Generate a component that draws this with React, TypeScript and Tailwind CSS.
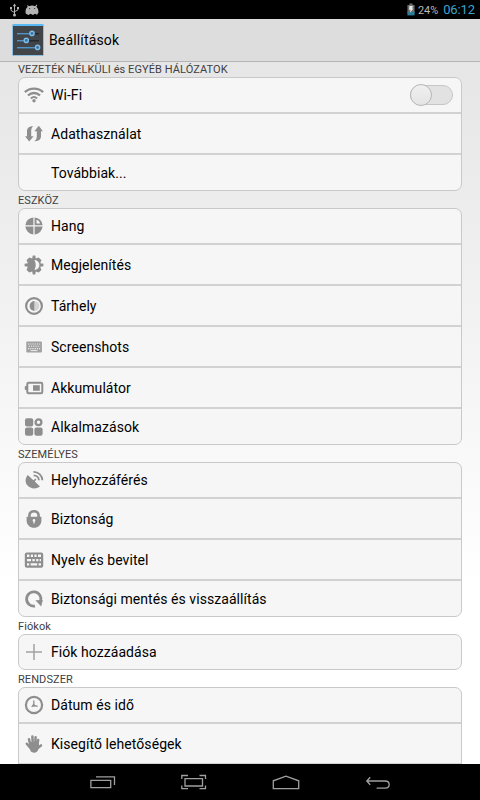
import { ReactNode } from "react";

const icons: Record<string, ReactNode> = {
  wifi: (
    <g fill="none" stroke="#8e8e8e" strokeWidth="2.4">
      <path d="M.9 7.2C5.8 2.4 14.2 2.4 19.1 7.2" />
      <path d="M4 10.5C7.4 7.2 12.6 7.2 16 10.5" />
      <path strokeWidth="2" d="M6.9 13.4C8.7 11.7 11.3 11.7 13.1 13.4" />
      <circle cx="10" cy="15.8" r="1.7" fill="#8e8e8e" stroke="none" />
    </g>
  ),
  data: (
    <g fill="#8e8e8e">
      <path d="M9.4 2.2C4.8 2 3 4.2 3 7.4V12.2H1.1L5.2 17.6L9.6 12.2H7.2V7.2C7.2 4.8 7.8 3.2 9.4 2.2Z" />
      <path d="M10.4 17.2C15 17.4 17 15.2 17 12V7.2H18.9L14.8 1.8L10.4 7.2H12.8V12C12.8 14.6 12 16.2 10.4 17.2Z" />
    </g>
  ),
  sound: (
    <g fill="#8e8e8e">
      <path d="M9.4 1.4V9.3H1.4A8.4 8.4 0 0 1 9.4 1.4Z" />
      <path d="M9.4 10.6V18.4A8.4 8.4 0 0 1 1.4 10.6Z" />
      <path d="M10.6 10.6H18.6A8.4 8.4 0 0 1 10.6 18.4Z" />
      <path
        fillRule="evenodd"
        d="M10.6 1.4A8.4 8.4 0 0 1 18.6 9.3H10.6ZM12.5 3.8V7.5H16.2C15.5 5.6 14.4 4.4 12.5 3.8Z"
      />
    </g>
  ),
  display: (
    <g>
      <path
        fill="#8e8e8e"
        d="M8.2 3.6L8.8 .6H11.2L11.8 3.6L14.6 2.4L17.4 5L16.2 8.2L19.4 8.8V11.2L16.2 11.8L17.4 15L14.8 17.6L11.8 16.4L11.2 19.4H8.8L8.2 16.4L5.2 17.6L2.6 15L3.8 11.8L.6 11.2V8.8L3.8 8.2L2.6 5L5.4 2.4Z"
      />
      <path fill="#f6f6f6" d="M10.4 5A5 5 0 0 1 10.4 15C12.2 12 12.2 8 10.4 5Z" />
    </g>
  ),
  storage: (
    <g>
      <circle cx="10" cy="10" r="7.9" fill="none" stroke="#8e8e8e" strokeWidth="2.2" />
      <path fill="#8e8e8e" d="M10.6 5V15A5 5 0 0 1 10.6 5Z" />
      <path fill="#d4d4d4" d="M10.6 5.2A4.8 4.8 0 0 1 10.6 14.8Z" />
    </g>
  ),
  screenshots: (
    <g>
      <rect x="2.3" y="4.6" width="15.6" height="10.8" rx="1" fill="#a0a0a0" />
      <path
        stroke="#ededed"
        strokeWidth="1.1"
        strokeDasharray="1.2 1"
        d="M4 7H16.6M4.8 9.3H16.2M4 11.6H16.6"
      />
      <path stroke="#ededed" strokeWidth="1" d="M6.6 13.6H13.4" />
    </g>
  ),
  battery: (
    <g>
      <rect x="3.3" y="4.7" width="15" height="10.6" rx="1.3" fill="none" stroke="#8e8e8e" strokeWidth="2" />
      <rect x=".8" y="8" width="2.6" height="4" rx=".8" fill="#8e8e8e" />
      <rect x="9" y="7.2" width="6.8" height="5.6" fill="#8e8e8e" />
    </g>
  ),
  apps: (
    <g fill="#8e8e8e">
      <rect x="1" y="1.2" width="8.2" height="8.2" rx="2" />
      <rect x="1" y="10.6" width="8.2" height="8.2" rx="2" />
      <rect x="10.4" y="10.6" width="8.2" height="8.2" rx="2" />
      <circle cx="14.5" cy="5.3" r="2.9" fill="none" stroke="#8e8e8e" strokeWidth="2.3" />
    </g>
  ),
  location: (
    <g>
      <path fill="#8e8e8e" d="M3.8 5L9.4 10.2L11.4 8.6L12.4 9.6L10.8 11.6L16 16.6C11.6 19.6 6.4 18.8 3.6 15.6C.9 12.6.9 8.4 3.8 5Z" />
      <path
        fill="none"
        stroke="#8e8e8e"
        strokeWidth="1.8"
        d="M9.4 1.8C14.2 1.6 18.2 5.4 18.4 10.2M9.6 5.3C12.6 5.3 14.8 7.4 14.9 10.2"
      />
    </g>
  ),
  lock: (
    <g>
      <path fill="none" stroke="#8e8e8e" strokeWidth="2.6" d="M5.4 9V6.4C5.4.8 14.6.8 14.6 6.4V9" />
      <path fill="#8e8e8e" d="M2.6 7.8H17.4V11.4C17.4 15.8 14 18.8 10 18.8S2.6 15.8 2.6 11.4Z" />
      <circle cx="10" cy="11.4" r="1.3" fill="#f6f6f6" />
      <path stroke="#f6f6f6" strokeWidth="1.2" d="M10 12V14.6" />
    </g>
  ),
  keyboard: (
    <g>
      <rect x=".8" y="2.4" width="18.4" height="15.4" rx="2" fill="#8e8e8e" />
      <path
        stroke="#f6f6f6"
        strokeWidth="2.4"
        d="M3 5.8H5.4M6.8 5.8H9M10.4 5.8H12.6M14 5.8H17M3 10.1H7M8.4 10.1H10.8M12.2 10.1H14.4M15.6 10.1H17M3 14.4H5.2M6.6 14.4H13.2M14.6 14.4H17"
      />
    </g>
  ),
  backup: (
    <g>
      <path fill="none" stroke="#8e8e8e" strokeWidth="2.8" d="M11 17.1A7.2 7.2 0 1 1 16.6 12.4" />
      <path fill="#8e8e8e" d="M11.4 11.2L18.8 11L17.2 17.6Z" />
    </g>
  ),
  add: <path stroke="#a2a2a2" strokeWidth="1.5" d="M10 2V18M2 10H18" />,
  clock: (
    <g fill="none" stroke="#8e8e8e">
      <circle cx="10" cy="10" r="8.1" strokeWidth="2.2" />
      <path strokeWidth="1.3" d="M9.8 5.6V10.4L13.6 11.4M9.8 9L7.8 12" />
      <circle cx="10" cy="10.6" r="1.2" fill="#8e8e8e" stroke="none" />
    </g>
  ),
  hand: (
    <g fill="none" stroke="#8e8e8e" strokeLinecap="round" strokeWidth="2.5">
      <path d="M5 5.2L6.6 12M8.4 2.6L8.8 11M11.6 3.2L11.2 11M14.2 6L13 12M2.8 9.8L6.4 14M17 11.4L12.6 14.8" />
      <path fill="#8e8e8e" stroke="none" d="M4.4 11L6 8H14.4L15.4 13.4L13 17.8C11 19 8.4 18.9 6.8 17.6Z" />
    </g>
  ),
};

const sections = [
  {
    title: "VEZETÉK NÉLKÜLI és EGYÉB HÁLÓZATOK",
    items: [
      { icon: "wifi", label: "Wi-Fi", toggle: true },
      { icon: "data", label: "Adathasználat" },
      { icon: "", label: "Továbbiak..." },
    ],
  },
  {
    title: "ESZKÖZ",
    items: [
      { icon: "sound", label: "Hang" },
      { icon: "display", label: "Megjelenítés" },
      { icon: "storage", label: "Tárhely" },
      { icon: "screenshots", label: "Screenshots" },
      { icon: "battery", label: "Akkumulátor" },
      { icon: "apps", label: "Alkalmazások" },
    ],
  },
  {
    title: "SZEMÉLYES",
    items: [
      { icon: "location", label: "Helyhozzáférés" },
      { icon: "lock", label: "Biztonság" },
      { icon: "keyboard", label: "Nyelv és bevitel" },
      { icon: "backup", label: "Biztonsági mentés és visszaállítás" },
    ],
  },
  {
    title: "Fiókok",
    items: [{ icon: "add", label: "Fiók hozzáadása" }],
  },
  {
    title: "RENDSZER",
    items: [
      { icon: "clock", label: "Dátum és idő" },
      { icon: "hand", label: "Kisegítő lehetőségek" },
      { icon: "", label: "" },
    ],
  },
];

const StatusBar = () => (
  <div className="flex h-[19px] shrink-0 items-center justify-between bg-black pr-[5px] pl-[9px]">
    <div className="flex items-center gap-[5px]">
      <svg width="11" height="14" viewBox="0 0 11 14" fill="none" stroke="#b4b4b4" strokeWidth="1">
        <path d="M5.5 2V11M2 5V7.4L5.5 9.6M9 5V6.8L5.5 8.8" />
        <path fill="#b4b4b4" stroke="none" d="M5.5 .4L7.2 3.2H3.8ZM1 4H3V6H1ZM8 4H10V6H8Z" />
        <circle cx="5.5" cy="12" r="1.5" fill="#b4b4b4" stroke="none" />
      </svg>
      <svg width="14" height="12" viewBox="0 0 14 12">
        <path
          fill="#b4b4b4"
          d="M2.2 .8L4 2.2C5.8 1.4 8.4 1.4 10 2.2L11.8 .6L12.2 1.2L11.4 3C12.6 4 13.4 5.6 13.4 7.2V8.8L12 10.8L10 9.8L8 11L5.6 9.8L3.4 11L.6 9.6V7C.6 5.4 1.4 4 2.6 3Z"
        />
        <circle cx="4.6" cy="4.6" r=".7" fill="#333" />
        <circle cx="9.6" cy="4.6" r=".7" fill="#333" />
      </svg>
    </div>
    <div className="flex items-center">
      <svg width="8" height="13" viewBox="0 0 8 13" className="mr-[3px]">
        <path fill="#6d6d6d" d="M2.4 .6H5.6V2H7.6V10H.4V2H2.4Z" />
        <path fill="#2a7f9c" d="M.4 9H7.6V12.4H.4Z" />
        <path fill="#e8e8e8" d="M2.4 3H6L5 5.6H6.4L2.8 10L3.6 6.8H2Z" />
      </svg>
      <span className="mr-[5px] pt-px text-[11px] leading-[19px] tracking-[-0.1px] text-[#b8b8b8]">24%</span>
      <span className="text-[13px] leading-[19px] tracking-[-0.1px] text-[#3ba5cc]">06:12</span>
    </div>
  </div>
);

const Header = () => (
  <div className="flex h-[43px] shrink-0 items-center border-b border-[#b4b4b4] bg-[#dddddd] pl-[12px]">
    <svg width="32" height="34" viewBox="0 0 32 34" className="mr-[5px]">
      <rect x=".5" y="1.5" width="31" height="31" rx="1" fill="#414549" stroke="#8cbfe2" />
      <path stroke="#58b9f4" strokeWidth="2" d="M1 2H31" />
      <path stroke="#26292c" strokeWidth="1.6" d="M5 10.7H27M5 17.7H27M5 24.7H27" />
      <path stroke="#5393c6" strokeWidth="1.4" d="M5 10.7H19M5 17.7H14M5 24.7H25" />
      <g fill="#3d6f99" stroke="#7cbce9" strokeWidth="1.4">
        <circle cx="20" cy="10.4" r="2.1" />
        <circle cx="14.3" cy="17.4" r="2.1" />
        <circle cx="25.6" cy="24.4" r="2.1" />
      </g>
    </svg>
    <h1 className="text-[14px] tracking-[0.15px] text-black">Beállítások</h1>
  </div>
);

const Toggle = () => (
  <div className="mr-[8px] ml-auto flex h-[20px] w-[43px] rounded-full border border-[#c6c6c6] bg-[#e2e2e2]">
    <div className="-mt-[2px] -ml-px h-[22px] w-[22px] rounded-full border border-[#b6b6b6] bg-gradient-to-b from-[#f0f0f0] to-[#e4e4e4]" />
  </div>
);

const NavBar = () => (
  <div className="flex h-9 shrink-0 items-center justify-between bg-black px-[89px]">
    <svg width="28" height="16" viewBox="0 0 28 16" fill="none" stroke="#a0a0a0" strokeWidth="1.3">
      <path d="M1.9 6.3H21.7V13.7H1.9ZM7 2.8H25.5V11" />
    </svg>
    <svg width="28" height="16" viewBox="0 0 28 16" fill="none" stroke="#a0a0a0" strokeWidth="1.3">
      <path d="M5 4.6H22.5V12H5ZM8 1.5H1.8V4.9M19.5 1.5H25.5V4.9M8 14.6H1.8V11.4M19.5 14.6H25.5V11.4" />
    </svg>
    <svg width="28" height="16" viewBox="0 0 28 16" fill="none" stroke="#a0a0a0" strokeWidth="1.3">
      <path d="M1.3 14.6V6.8L14 2.2L26.7 6.8V14.6Z" />
    </svg>
    <svg width="28" height="16" viewBox="0 0 28 16" fill="none" stroke="#a0a0a0" strokeWidth="1.3">
      <path d="M7.2 3.2L3.8 7L7.2 10.8M3.8 7H22C27.6 7 27.6 14.2 22 14.2H13.6" />
    </svg>
  </div>
);

const App = () => {
  return (
    <div className="flex h-[800px] w-[480px] flex-col overflow-hidden font-['Roboto','Noto_Sans',sans-serif]">
      <StatusBar />
      <Header />
      <main className="min-h-0 flex-1 overflow-hidden bg-gradient-to-b from-[#e6e6e6] to-white to-75% px-[18px]">
        {sections.map((section, idx) => (
          <section key={section.title}>
            <h2
              className={`${idx === 0 ? "h-[15px] leading-[16px]" : "h-[17px] leading-[19px]"} text-[11px] tracking-[0.08px] whitespace-nowrap text-[#404040]`}
            >
              {section.title}
            </h2>
            <ul className="overflow-hidden rounded-[7px] border border-[#c9c9c9] bg-[#f6f6f6]">
              {section.items.map((item, i) => (
                <li
                  key={item.label}
                  className="flex h-[41px] items-center border-b-2 border-[#d2d2d2] pl-[5px] first:h-[36px] last:h-[35px] last:border-b-0 only:h-[34px]"
                >
                  <svg width="20" height="20" viewBox="0 0 20 20" className="mr-[7px] shrink-0">
                    {icons[item.icon]}
                  </svg>
                  <span className="mt-px text-[14px] tracking-[0.06px] whitespace-nowrap text-black">
                    {item.label}
                  </span>
                  {i === 0 && "toggle" in item && <Toggle />}
                </li>
              ))}
            </ul>
          </section>
        ))}
      </main>
      <NavBar />
    </div>
  );
};

export default App;
